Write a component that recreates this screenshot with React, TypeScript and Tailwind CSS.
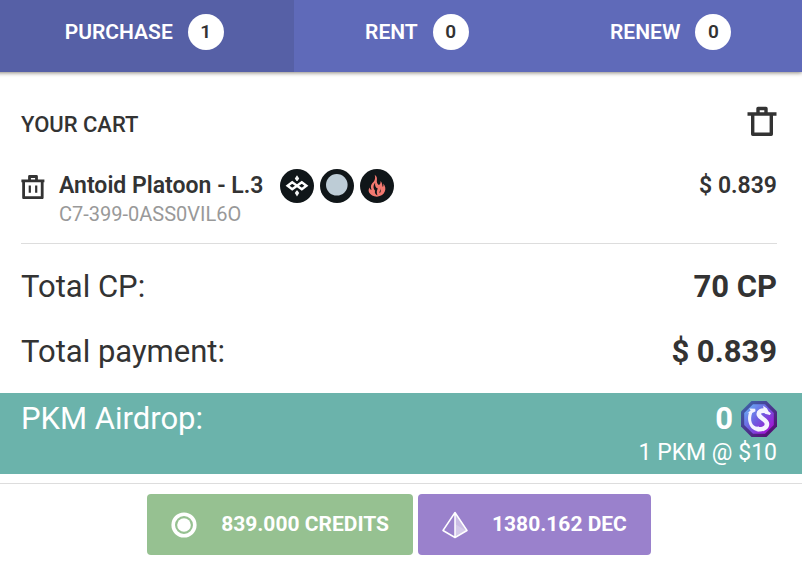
import { useState } from "react";

const tabs = [
  { label: "PURCHASE", count: 1 },
  { label: "RENT", count: 0 },
  { label: "RENEW", count: 0 },
];

function TrashIcon() {
  return (
    <svg viewBox="0 0 30 30" className="size-[30px]" fill="none" stroke="currentColor" strokeWidth="3.4" strokeLinejoin="round" aria-hidden="true">
      <path d="M.5 8H29.5M5.7 8V28.3H24.3V8M11 8V2.5H19V8" />
    </svg>
  );
}

function ItemTrashIcon() {
  return (
    <svg viewBox="0 0 24 24" className="size-6" fill="none" stroke="currentColor" strokeWidth="2.8" strokeLinejoin="round" aria-hidden="true">
      <path d="M.4 5.8H23.4M2.6 5.8V22.7H21.2V5.8M8.5 5.8V1.5H15.5V5.8" />
      <path d="M8.8 10.5V17.7M15.2 10.5V17.7" strokeWidth="2.2" />
    </svg>
  );
}

function RarityIcon() {
  return (
    <svg viewBox="0 0 34 34" className="size-[34px]" role="img" aria-label="Common">
      <circle cx="17" cy="17" r="17" fill="#101619" />
      <path d="M7.6 16.7 12.2 13.3 17 16.7 21.8 13.3 26.4 16.7 21.8 20.2 17 16.7 12.2 20.2Z" fill="none" stroke="#fff" strokeWidth="2.4" />
      <path d="M17 6.2 19.2 9.6 17.5 12H16.5L14.8 9.6ZM17 27.4 19.2 24 17.5 21.6H16.5L14.8 24Z" fill="#f1f3f3" />
    </svg>
  );
}

function FoilIcon() {
  return (
    <svg viewBox="0 0 34 34" className="size-[34px]" role="img" aria-label="Silver">
      <circle cx="17" cy="17" r="17" fill="#101619" />
      <circle cx="16.8" cy="15.8" r="10.8" fill="#bdccd6" />
    </svg>
  );
}

function FireIcon() {
  return (
    <svg viewBox="0 0 34 34" className="size-[34px]" role="img" aria-label="Fire">
      <circle cx="17" cy="17" r="17" fill="#101619" />
      <path d="M14.7 5.8C19 8.8 15.4 12.1 17.7 15 19.2 16.9 20.7 15.5 20.6 12.1 22.4 13.7 22.1 16.6 22.8 18.1 23.4 17.5 23.6 16.2 23.3 14.5 27.5 19.3 25.3 26.9 17 27.7 9.3 26.6 7.2 22 9.5 18.4 9.9 20 10.6 20.7 11.6 20.7 9.6 15.5 12.8 14.4 14.3 11.8 15.3 9.8 15.3 7.8 14.7 5.8Z" fill="#f37970" />
      <path d="M15.2 13.8C12.8 16.7 13.2 19.6 15.2 21.8 14.2 23.6 15.2 25.2 17.5 26.4 16.3 23.6 16.8 21.3 17.8 19.6 15.5 18.8 14.6 16.2 15.2 13.8ZM20.4 18.7C21 20.9 19.2 22.1 19.6 24.3 20.7 23.4 21 22.1 20.4 18.7Z" fill="#101619" />
    </svg>
  );
}

function TokenIcon() {
  return (
    <svg viewBox="0 0 36 36" className="size-9" role="img" aria-label="PKM">
      <defs>
        <linearGradient id="token-fill" x1="5" y1="5" x2="31" y2="30" gradientUnits="userSpaceOnUse">
          <stop offset="0" stopColor="#68aef5" />
          <stop offset=".5" stopColor="#6f59df" />
          <stop offset="1" stopColor="#a80bd2" />
        </linearGradient>
        <linearGradient id="token-edge" x1="3" y1="3" x2="30" y2="34" gradientUnits="userSpaceOnUse">
          <stop stopColor="#3f61aa" />
          <stop offset="1" stopColor="#550d73" />
        </linearGradient>
      </defs>
      <path d="M10.5 0H25.5L36 10.5V25.5L25.5 36H10.5L0 25.5V10.5Z" fill="url(#token-edge)" />
      <path d="M12 3.2H24L32.8 12V24L24 32.8H12L3.2 24V12Z" fill="url(#token-fill)" />
      <path d="M25 10C20.5 8.8 17 10.8 18 14 19.2 17.8 26 18.5 26 23 26 27.6 20 28.8 16 28" fill="none" stroke="#f4f3ff" strokeWidth="4.6" />
      <path d="M8 11.5C5 20.5 9.5 30.2 18 30.2V25.6C11 26.5 8.5 19.5 11.2 12L14.5 10.3 14.2 7.8 8.3 7.4 9.6 9.4 5.9 12.4Z" fill="#f4f3ff" />
      <path d="M22.5 7.5 22.2 4.8 26 7.6 27.6 10.5 30 12.2 28.8 14 24 12.8Z" fill="#f4f3ff" />
    </svg>
  );
}

function CreditsIcon() {
  return (
    <svg viewBox="0 0 26 26" className="size-[26px]" aria-hidden="true">
      <circle cx="13" cy="13" r="10.8" fill="none" stroke="#fff" strokeWidth="3.6" />
      <circle cx="13" cy="13" r="6.8" fill="#fff" />
    </svg>
  );
}

function DecIcon() {
  return (
    <svg viewBox="0 0 26 28" className="h-7 w-[26px]" aria-hidden="true">
      <path d="M13 1.5 25 19.5 13 26.5Z" fill="#fff" fillOpacity=".48" />
      <path d="M13 13 24 19.5 13 25Z" fill="#fff" fillOpacity=".22" />
      <path d="M13 1.5 1 19.5 13 26.5 25 19.5ZM13 1.5V26.5" fill="none" stroke="#fff" strokeWidth="1.5" strokeLinejoin="round" />
    </svg>
  );
}

export default function App() {
  const [active, setActive] = useState(0);
  return (
    <main className="bg-white font-['Roboto',sans-serif] text-[#333]">
      <div className="overflow-hidden pb-2">
        <nav className="-ml-1.5 flex bg-[#5f6ab9] shadow-[0_1px_4px_#8b877d]">
          {tabs.map((tab, i) => (
            <button
              key={tab.label}
              type="button"
              aria-pressed={active === i}
              onClick={() => setActive(i)}
              className={`flex h-[72px] flex-auto justify-center gap-[15px] pt-3.5 text-[21px] leading-9 font-semibold text-white ${active === i ? "bg-[#5660a6]" : ""}`}
            >
              <span>{tab.label}</span>
              <span className="flex size-9 items-center justify-center rounded-full bg-white text-[19px] text-[#333]">{tab.count}</span>
            </button>
          ))}
        </nav>
      </div>
      <section className="pr-[25px] pl-[21px]">
        <header className="flex items-start justify-between pt-[26px]">
          <h1 className="text-[22px] leading-[38px] font-medium">YOUR CART</h1>
          <button type="button" aria-label="Empty cart"><TrashIcon /></button>
        </header>
        <article className="flex items-start border-b border-[#ddd] pt-6 pb-[19px]">
          <button type="button" aria-label="Remove Antoid Platoon" className="mt-[7px] mr-3.5"><ItemTrashIcon /></button>
          <div className="flex-1">
            <div className="flex items-center">
              <h2 className="mr-[17px] text-[23px] leading-9 font-semibold">Antoid Platoon - L.3</h2>
              <div className="flex gap-1.5"><RarityIcon /><FoilIcon /><FireIcon /></div>
            </div>
            <p className="text-xl leading-5 text-[#999]">C7-399-0ASS0VIL6O</p>
          </div>
          <span className="text-[23px] leading-9 font-semibold">$ 0.839</span>
        </article>
        <dl className="pt-2.5 pb-[9px] text-[31px] leading-[65px]">
          <div className="flex justify-between"><dt>Total CP:</dt><dd className="font-bold">70 CP</dd></div>
          <div className="flex justify-between"><dt>Total payment:</dt><dd className="font-bold">$ 0.839</dd></div>
        </dl>
      </section>
      <section className="flex justify-between bg-[#6bb3ab] pt-1.5 pr-[25px] pb-[7px] pl-[21px] text-white">
        <h2 className="text-[31px] leading-10">PKM Airdrop:</h2>
        <div>
          <div className="flex items-center justify-end gap-2 text-[31px] leading-10 font-bold">0<TokenIcon /></div>
          <p className="text-right text-[23px] leading-7">1 PKM @ $10</p>
        </div>
      </section>
      <footer className="mt-[9px] flex justify-center gap-[5px] border-t border-[#ddd] pt-2.5 pr-1 pb-5 text-[21px] font-bold text-white">
        <button type="button" className="flex h-[61px] items-center gap-6 rounded bg-[#96c191] px-6"><CreditsIcon />839.000 CREDITS</button>
        <button type="button" className="flex h-[61px] items-center gap-6 rounded bg-[#9a81cc] px-6"><DecIcon />1380.162 DEC</button>
      </footer>
    </main>
  );
}
